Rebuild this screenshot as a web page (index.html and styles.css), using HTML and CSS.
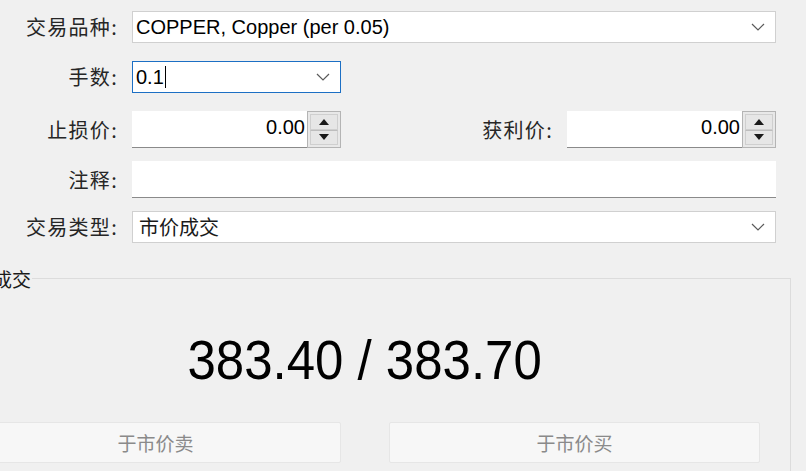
FILE: index.html
```html
<!DOCTYPE html>
<html lang="zh">
<head>
<meta charset="utf-8">
<title>交易</title>
<link rel="stylesheet" href="styles.css">
</head>
<body>
<div class="form">
  <div class="row row-symbol">
    <label class="lbl">交易品种:</label>
    <div class="combo wide">
      <span class="val">COPPER, Copper (per 0.05)</span>
      <svg class="chev" width="14" height="8" viewBox="0 0 14 8"><path d="M1 1 L7 7 L13 1" fill="none" stroke="#5a5a5a" stroke-width="1.2"/></svg>
    </div>
  </div>
  <div class="row row-volume">
    <label class="lbl">手数:</label>
    <div class="combo narrow focus">
      <span class="val">0.1<span class="caret"></span></span>
      <svg class="chev" width="14" height="8" viewBox="0 0 14 8"><path d="M1 1 L7 7 L13 1" fill="none" stroke="#5a5a5a" stroke-width="1.2"/></svg>
    </div>
  </div>
  <div class="row row-stops">
    <label class="lbl">止损价:</label>
    <div class="pair">
      <div class="spin">
        <div class="spin-field">0.00</div>
        <div class="spin-btns">
          <div class="sb"><svg width="10" height="6" viewBox="0 0 10 6"><path d="M5 0 L10 6 L0 6 Z" fill="#1a1a1a"/></svg></div>
          <div class="sb"><svg width="10" height="6" viewBox="0 0 10 6"><path d="M0 0 L10 0 L5 6 Z" fill="#1a1a1a"/></svg></div>
        </div>
      </div>
      <label class="lbl lbl-tp">获利价:</label>
      <div class="spin">
        <div class="spin-field">0.00</div>
        <div class="spin-btns">
          <div class="sb"><svg width="10" height="6" viewBox="0 0 10 6"><path d="M5 0 L10 6 L0 6 Z" fill="#1a1a1a"/></svg></div>
          <div class="sb"><svg width="10" height="6" viewBox="0 0 10 6"><path d="M0 0 L10 0 L5 6 Z" fill="#1a1a1a"/></svg></div>
        </div>
      </div>
    </div>
  </div>
  <div class="row row-comment">
    <label class="lbl">注释:</label>
    <div class="field wide"></div>
  </div>
  <div class="row row-type">
    <label class="lbl">交易类型:</label>
    <div class="combo wide">
      <span class="val cjk">市价成交</span>
      <svg class="chev" width="14" height="8" viewBox="0 0 14 8"><path d="M1 1 L7 7 L13 1" fill="none" stroke="#5a5a5a" stroke-width="1.2"/></svg>
    </div>
  </div>
</div>

<fieldset class="group">
  <legend class="group-title">市价成交</legend>
  <div class="price"><span class="price-text">383.40 / 383.70</span></div>
  <div class="actions">
    <button class="btn">于市价卖</button>
    <button class="btn">于市价买</button>
  </div>
</fieldset>
</body>
</html>
```

FILE: styles.css
```css
html, body {
  margin: 0;
  padding: 0;
}
body {
  width: 806px;
  height: 471px;
  overflow: hidden;
  background: #f0f0f0;
  font-family: "Liberation Sans", "Noto Sans CJK SC", sans-serif;
  font-size: 20px;
  color: #000;
}

.form {
  padding-top: 11px;
  display: flex;
  flex-direction: column;
}

.row {
  display: grid;
  grid-template-columns: 132px 644px;
  align-items: center;
}
.row-volume { margin-top: 18px; }
.row-stops { margin-top: 18px; }
.row-comment { margin-top: 13px; }
.row-type { margin-top: 13px; }

.lbl {
  font-family: "Noto Sans CJK SC", sans-serif;
  font-size: 20px;
  letter-spacing: 1.3px;
  color: #262626;
  text-align: right;
  padding-right: 14px;
  line-height: 1;
}

.combo {
  height: 32px;
  box-sizing: border-box;
  background: #fff;
  border: 1px solid #d0d0d0;
  display: flex;
  align-items: center;
  justify-content: space-between;
  padding: 0 10px 0 3px;
}
.combo.wide { width: 644px; }
.combo.narrow { width: 209px; }
.combo.focus { border-color: #1c6fc4; }
.val {
  line-height: 1;
  display: flex;
  align-items: center;
}
.val.cjk {
  font-family: "Noto Sans CJK SC", sans-serif;
  font-size: 20px;
  padding-left: 3px;
  color: #1a1a1a;
}
.chev { display: block; }
.caret {
  display: inline-block;
  width: 1px;
  height: 22px;
  background: #000;
  margin-left: 1px;
}

.pair {
  display: grid;
  grid-template-columns: 209px 1fr 209px;
  align-items: center;
}

.spin {
  display: flex;
  height: 37px;
}
.spin-field {
  flex: 1;
  background: #fff;
  border-bottom: 1px solid #8a8a8a;
  text-align: right;
  padding-right: 2px;
  line-height: 33px;
}
.spin-btns {
  width: 34px;
  box-sizing: border-box;
  border: 1px solid #b4b4b4;
  background: #e8e8e8;
  display: flex;
  flex-direction: column;
  padding: 2px;
}
.sb {
  flex: 1;
  display: flex;
  align-items: center;
  justify-content: center;
  background: #e6e6e6;
  border: 1px solid #cfcfcf;
}
.sb + .sb { border-top: 1px solid #bdbdbd; }

.field {
  height: 37px;
  box-sizing: border-box;
  background: #fff;
  border-bottom: 1px solid #8a8a8a;
}
.field.wide { width: 644px; }

.group {
  margin: 26px 0 0 -61px;
  width: 852px;
  height: 203px;
  box-sizing: border-box;
  border: 1px solid #dcdcdc;
  border-bottom: none;
  padding: 0 30px;
}
.group-title {
  font-family: "Noto Sans CJK SC", sans-serif;
  font-size: 19px;
  color: #1a1a1a;
  padding: 0 1px;
  margin-left: -16px;
  line-height: 1;
}
.price {
  height: 120px;
  display: flex;
  align-items: center;
  justify-content: center;
  margin-top: 12px;
}
.price-text {
  font-family: "Liberation Sans", sans-serif;
  font-size: 56px;
  color: #000;
  display: inline-block;
  transform: scaleX(0.91);
  line-height: 1;
}
.actions {
  display: grid;
  grid-template-columns: 1fr 1fr;
  gap: 48px;
  margin-top: 2px;
}
.btn {
  height: 41px;
  background: #f7f7f7;
  border: 1px solid #e6e6e6;
  border-radius: 2px;
  font-family: "Noto Sans CJK SC", sans-serif;
  font-size: 19px;
  color: #8a8a8a;
}
```
